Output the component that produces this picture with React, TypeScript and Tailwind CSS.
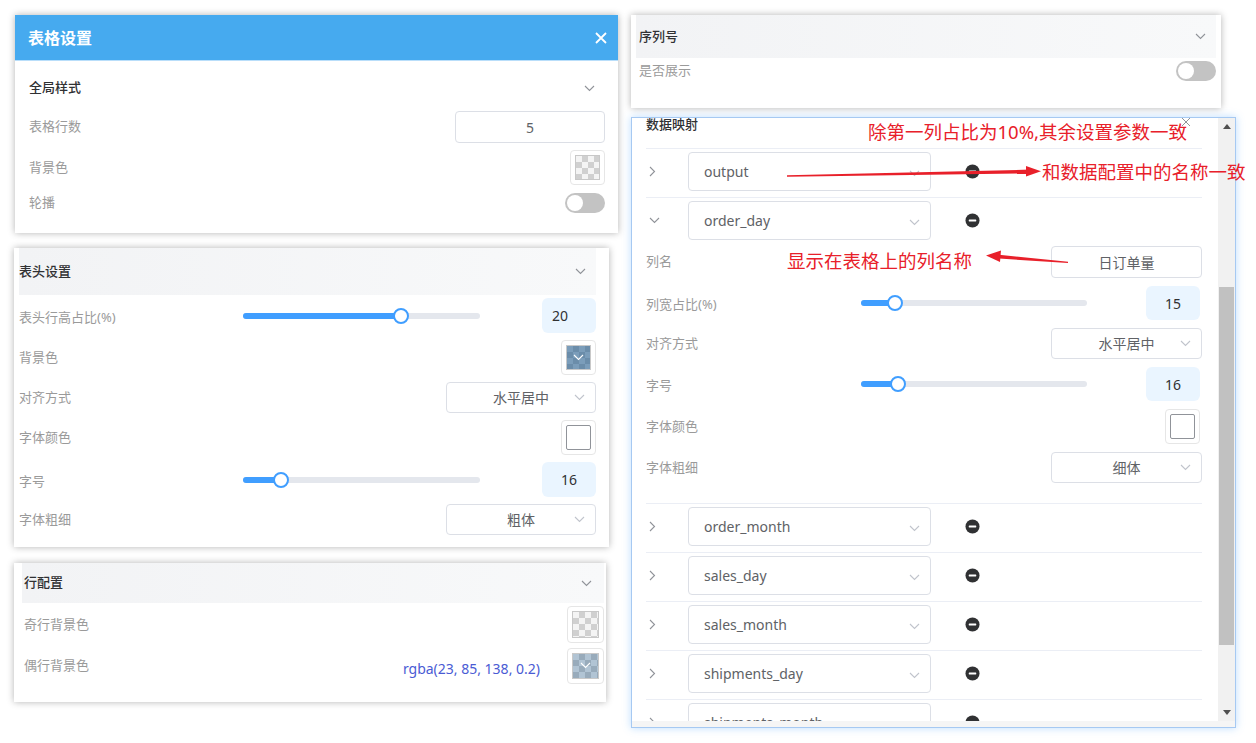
import React from "react";

const CHECKER =
  "bg-[conic-gradient(#d0d0d0_25%,#f4f4f4_0_50%,#d0d0d0_0_75%,#f4f4f4_0)] bg-[length:12px_12px]";

function ChevronDown({ color = "#909399", className = "" }: { color?: string; className?: string }) {
  return (
    <svg width="11" height="7" viewBox="0 0 11 7" className={className}>
      <polyline points="1,1 5.5,5.5 10,1" fill="none" stroke={color} strokeWidth="1.1" />
    </svg>
  );
}

function ChevronRight() {
  return (
    <svg width="7" height="11" viewBox="0 0 7 11">
      <polyline points="1,1 5.5,5.5 1,10" fill="none" stroke="#909399" strokeWidth="1.1" />
    </svg>
  );
}

function MinusCircle() {
  return (
    <svg width="15" height="15" viewBox="0 0 16 16">
      <circle cx="8" cy="8" r="7.5" fill="#303133" />
      <rect x="4" y="7" width="8" height="2" rx="0.5" fill="#fff" />
    </svg>
  );
}

function Switch() {
  return (
    <div className="flex h-[20px] w-[40px] items-center rounded-full bg-[#c3c3c3] px-[2px]">
      <div className="h-[16px] w-[16px] rounded-full bg-white" />
    </div>
  );
}

function Slider({ pct, className }: { pct: number; className: string }) {
  return (
    <div className={`relative h-[6px] rounded-full bg-[#e4e7ed] ${className}`}>
      <div className="h-full rounded-full bg-[#409eff]" style={{ width: `${pct}%` }} />
      <div
        className="absolute top-1/2 h-[16px] w-[16px] -translate-y-1/2 rounded-full border-2 border-[#409eff] bg-white"
        style={{ left: `calc(${pct}% - 8px)` }}
      />
    </div>
  );
}

function NumBox({ value, className = "" }: { value: string; className?: string }) {
  return (
    <div
      className={`flex w-[54px] items-center justify-center rounded-[6px] bg-[#eaf5ff] text-[14px] text-[#303133] ${className}`}
    >
      {value}
    </div>
  );
}

function SelectBox({ value, className = "" }: { value: string; className?: string }) {
  return (
    <div
      className={`relative flex items-center justify-center rounded-[4px] border border-[#dcdfe6] bg-white text-[14px] text-[#606266] ${className}`}
    >
      {value}
      <ChevronDown color="#c0c4cc" className="absolute right-[10px]" />
    </div>
  );
}

function Swatch({ kind, className = "h-[35px] w-[35px]" }: { kind: "empty" | "blue" | "light" | "white"; className?: string }) {
  return (
    <div className={`rounded-[4px] border border-[#e6e6e6] bg-white p-[4px] ${className}`}>
      {kind === "white" ? (
        <div className="h-full w-full rounded-[2px] border border-[#909399] bg-white" />
      ) : (
        <div className={`h-full w-full border border-[#c8c8c8] ${CHECKER}`}>
          {kind === "blue" && (
            <div className="flex h-full w-full items-center justify-center bg-[rgba(23,85,138,0.55)]">
              <ChevronDown color="#ffffff" />
            </div>
          )}
          {kind === "light" && (
            <div className="flex h-full w-full items-center justify-center bg-[rgba(23,85,138,0.3)]">
              <ChevronDown color="#ffffff" />
            </div>
          )}
        </div>
      )}
    </div>
  );
}

function Label({ children }: { children: React.ReactNode }) {
  return <span className="text-[13px] text-[#9a9a9a]">{children}</span>;
}

function DataRow({ name, open = false }: { name: string; open?: boolean }) {
  return (
    <div className="h-[49px] border-t border-[#ebeef5] pt-[3px]">
      <div className="flex h-[39px] items-center">
        <div className="flex w-[42px] pl-[3px]">{open ? <ChevronDown /> : <ChevronRight />}</div>
        <div className="relative flex h-[39px] w-[243px] items-center rounded-[4px] border border-[#dcdfe6] pl-[15px] text-[14px] text-[#606266]">
          {name}
          <ChevronDown color="#c0c4cc" className="absolute right-[10px] top-[17px]" />
        </div>
        <div className="ml-[34px] flex">
          <MinusCircle />
        </div>
      </div>
    </div>
  );
}

const HEADER_BAND = "bg-gradient-to-r from-[#f2f3f5] to-[#f8f9fa]";
const SHADOW = "shadow-[0_0_7px_rgba(0,0,0,0.3)]";

export default function App() {
  const rest = ["order_month", "sales_day", "sales_month", "shipments_day", "shipments_month"];

  return (
    <div className="relative flex h-[743px] w-[1256px] overflow-hidden bg-white font-['Noto_Sans','Noto_Sans_CJK_SC',sans-serif]">
      {/* left column */}
      <div className="flex flex-col pl-[14px] pt-[15px]">
        {/* 表格设置 */}
        <div className={`ml-[1px] h-[218px] w-[603px] bg-white ${SHADOW}`}>
          <div className="flex h-[46px] items-center justify-between border-b border-[#b9defa] bg-[#46aaef] pl-[13px] pr-[11px]">
            <span className="text-[16px] font-bold text-white">表格设置</span>
            <svg width="12" height="12" viewBox="0 0 12 12">
              <path d="M1 1L11 11M11 1L1 11" stroke="#fff" strokeWidth="1.8" />
            </svg>
          </div>
          <div className="pl-[14px] pr-[13px]">
            <div className="flex h-[50px] items-center justify-between pt-[4px]">
              <span className="text-[13px] font-medium text-[#303133]">全局样式</span>
              <ChevronDown className="mr-[10px]" />
            </div>
            <div className="flex h-[32px] items-center justify-between">
              <Label>表格行数</Label>
              <div className="flex h-[32px] w-[150px] items-center justify-center rounded-[4px] border border-[#dcdfe6] text-[14px] text-[#606266]">
                5
              </div>
            </div>
            <div className="mt-[7px] flex h-[35px] items-center justify-between">
              <Label>背景色</Label>
              <Swatch kind="empty" />
            </div>
            <div className="mt-[8px] flex h-[20px] items-center justify-between">
              <Label>轮播</Label>
              <Switch />
            </div>
          </div>
        </div>

        {/* 表头设置 */}
        <div className={`mt-[15px] h-[299px] w-[595px] bg-white pl-[5px] pr-[13px] ${SHADOW}`}>
          <div className={`flex h-[47px] items-center justify-between pr-[10px] ${HEADER_BAND}`}>
            <span className="text-[13px] font-medium text-[#303133]">表头设置</span>
            <ChevronDown />
          </div>
          <div className="flex flex-col gap-[7px] pt-[3px]">
            <div className="flex h-[35px] items-center">
              <div className="w-[224px]">
                <Label>表头行高占比(%)</Label>
              </div>
              <Slider pct={66.7} className="w-[237px]" />
              <NumBox value="20" className="ml-auto h-[35px] justify-start pl-[10px]" />
            </div>
            <div className="flex h-[35px] items-center justify-between">
              <Label>背景色</Label>
              <Swatch kind="blue" />
            </div>
            <div className="flex h-[31px] items-center justify-between">
              <Label>对齐方式</Label>
              <SelectBox value="水平居中" className="h-[31px] w-[150px]" />
            </div>
            <div className="flex h-[35px] items-center justify-between">
              <Label>字体颜色</Label>
              <Swatch kind="white" />
            </div>
            <div className="flex h-[35px] items-center">
              <div className="w-[224px]">
                <Label>字号</Label>
              </div>
              <Slider pct={16} className="w-[237px]" />
              <NumBox value="16" className="ml-auto h-[35px]" />
            </div>
            <div className="flex h-[31px] items-center justify-between">
              <Label>字体粗细</Label>
              <SelectBox value="粗体" className="h-[31px] w-[150px]" />
            </div>
          </div>
        </div>

        {/* 行配置 */}
        <div className={`mt-[16px] h-[139px] w-[592px] bg-white pl-[8px] pr-[2px] ${SHADOW}`}>
          <div className={`flex h-[40px] items-center justify-between pl-[2px] pr-[12px] ${HEADER_BAND}`}>
            <span className="text-[13px] font-medium text-[#303133]">行配置</span>
            <ChevronDown />
          </div>
          <div className="pl-[2px]">
            <div className="mt-[3px] flex h-[37px] items-center justify-between">
              <Label>奇行背景色</Label>
              <Swatch kind="empty" className="h-[37px] w-[37px]" />
            </div>
            <div className="mt-[5px] flex h-[35px] items-center justify-between">
              <Label>偶行背景色</Label>
              <div className="flex items-center gap-[27px]">
                <span className="pt-[5px] text-[14px] text-[#4a5bd4]">rgba(23, 85, 138, 0.2)</span>
                <Swatch kind="light" className="h-[36px] w-[37px]" />
              </div>
            </div>
          </div>
        </div>
      </div>

      {/* right column */}
      <div className="ml-[13px] flex flex-col pt-[15px]">
        {/* 序列号 */}
        <div className={`h-[93px] w-[590px] bg-white pl-[5px] pr-[5px] ${SHADOW}`}>
          <div className={`flex h-[43px] items-center justify-between pl-[3px] pr-[10px] ${HEADER_BAND}`}>
            <span className="text-[13px] font-medium text-[#303133]">序列号</span>
            <ChevronDown />
          </div>
          <div className="mt-[3px] flex h-[20px] items-center justify-between pl-[3px]">
            <Label>是否展示</Label>
            <Switch />
          </div>
        </div>

        {/* 数据映射 */}
        <div className="mt-[9px] flex h-[611px] w-[605px] flex-col border border-[#a6c9f2] bg-white shadow-[0_0_8px_rgba(64,158,255,0.35)]">
          <div className="flex h-[603px]">
            <div className="w-[586px] overflow-hidden pl-[14px] pr-[16px]">
              <div className="flex h-[30px] items-start justify-between">
                <span className="-mt-[4px] text-[13px] font-medium leading-[20px] text-[#303133]">数据映射</span>
                <svg width="10" height="10" viewBox="0 0 10 10" className="mr-[11px] -mt-[1px]">
                  <path d="M1 1L9 9M9 1L1 9" stroke="#909399" strokeWidth="1" />
                </svg>
              </div>
              <DataRow name="output" />
              <DataRow name="order_day" open />
              <div className="flex flex-col gap-[8px] pb-[20px]">
                <div className="flex h-[32px] items-center justify-between">
                  <Label>列名</Label>
                  <div className="flex h-[32px] w-[151px] items-center justify-center rounded-[4px] border border-[#dcdfe6] text-[14px] text-[#606266]">
                    日订单量
                  </div>
                </div>
                <div className="flex h-[34px] items-center">
                  <div className="w-[215px]">
                    <Label>列宽占比(%)</Label>
                  </div>
                  <Slider pct={15} className="w-[226px]" />
                  <NumBox value="15" className="ml-auto mr-[2px] h-[34px]" />
                </div>
                <div className="flex h-[31px] items-center justify-between">
                  <Label>对齐方式</Label>
                  <SelectBox value="水平居中" className="h-[31px] w-[151px]" />
                </div>
                <div className="flex h-[34px] items-center">
                  <div className="w-[215px]">
                    <Label>字号</Label>
                  </div>
                  <Slider pct={16.4} className="w-[226px]" />
                  <NumBox value="16" className="ml-auto mr-[2px] h-[34px]" />
                </div>
                <div className="flex h-[35px] items-center justify-between">
                  <Label>字体颜色</Label>
                  <Swatch kind="white" className="mr-[2px] h-[35px] w-[35px]" />
                </div>
                <div className="flex h-[31px] items-center justify-between">
                  <Label>字体粗细</Label>
                  <SelectBox value="细体" className="h-[31px] w-[151px]" />
                </div>
              </div>
              {rest.map((n) => (
                <DataRow key={n} name={n} />
              ))}
            </div>
            {/* scrollbar */}
            <div className="flex w-[17px] flex-col bg-[#f1f1f1] px-[1px]">
              <div className="flex h-[17px] items-center justify-center">
                <svg width="8" height="5" viewBox="0 0 8 5">
                  <polygon points="0,5 4,0 8,5" fill="#505050" />
                </svg>
              </div>
              <div className="h-[152px]" />
              <div className="h-[358px] bg-[#c1c1c1]" />
              <div className="flex-1" />
              <div className="flex h-[17px] items-center justify-center">
                <svg width="8" height="5" viewBox="0 0 8 5">
                  <polygon points="0,0 8,0 4,5" fill="#505050" />
                </svg>
              </div>
            </div>
          </div>
          <div className="flex-1 bg-[#f5f5f5]" />
        </div>
      </div>

      {/* annotations */}
      <svg className="pointer-events-none absolute left-0 top-0" width="1256" height="743">
        <polygon points="787,175.2 787,176.8 1030,173.4 1030,169.6" fill="#e8202a" />
        <polygon points="1041,171.3 1026,166 1026,176.6" fill="#e8202a" />
        <polygon points="999,254.8 999,258.6 1068,262.9 1068,261.7" fill="#e8202a" />
        <polygon points="986,255.6 1001,250.4 1000,262" fill="#e8202a" />
      </svg>
      <div className="absolute left-[868px] top-[120px] whitespace-nowrap text-[18.5px] leading-[24px] text-[#e8202a]">
        除第一列占比为10%,其余设置参数一致
      </div>
      <div className="absolute left-[1042px] top-[160px] whitespace-nowrap text-[18.5px] leading-[24px] text-[#e8202a]">
        和数据配置中的名称一致
      </div>
      <div className="absolute left-[787px] top-[249px] whitespace-nowrap text-[18.5px] leading-[24px] text-[#e8202a]">
        显示在表格上的列名称
      </div>
    </div>
  );
}
